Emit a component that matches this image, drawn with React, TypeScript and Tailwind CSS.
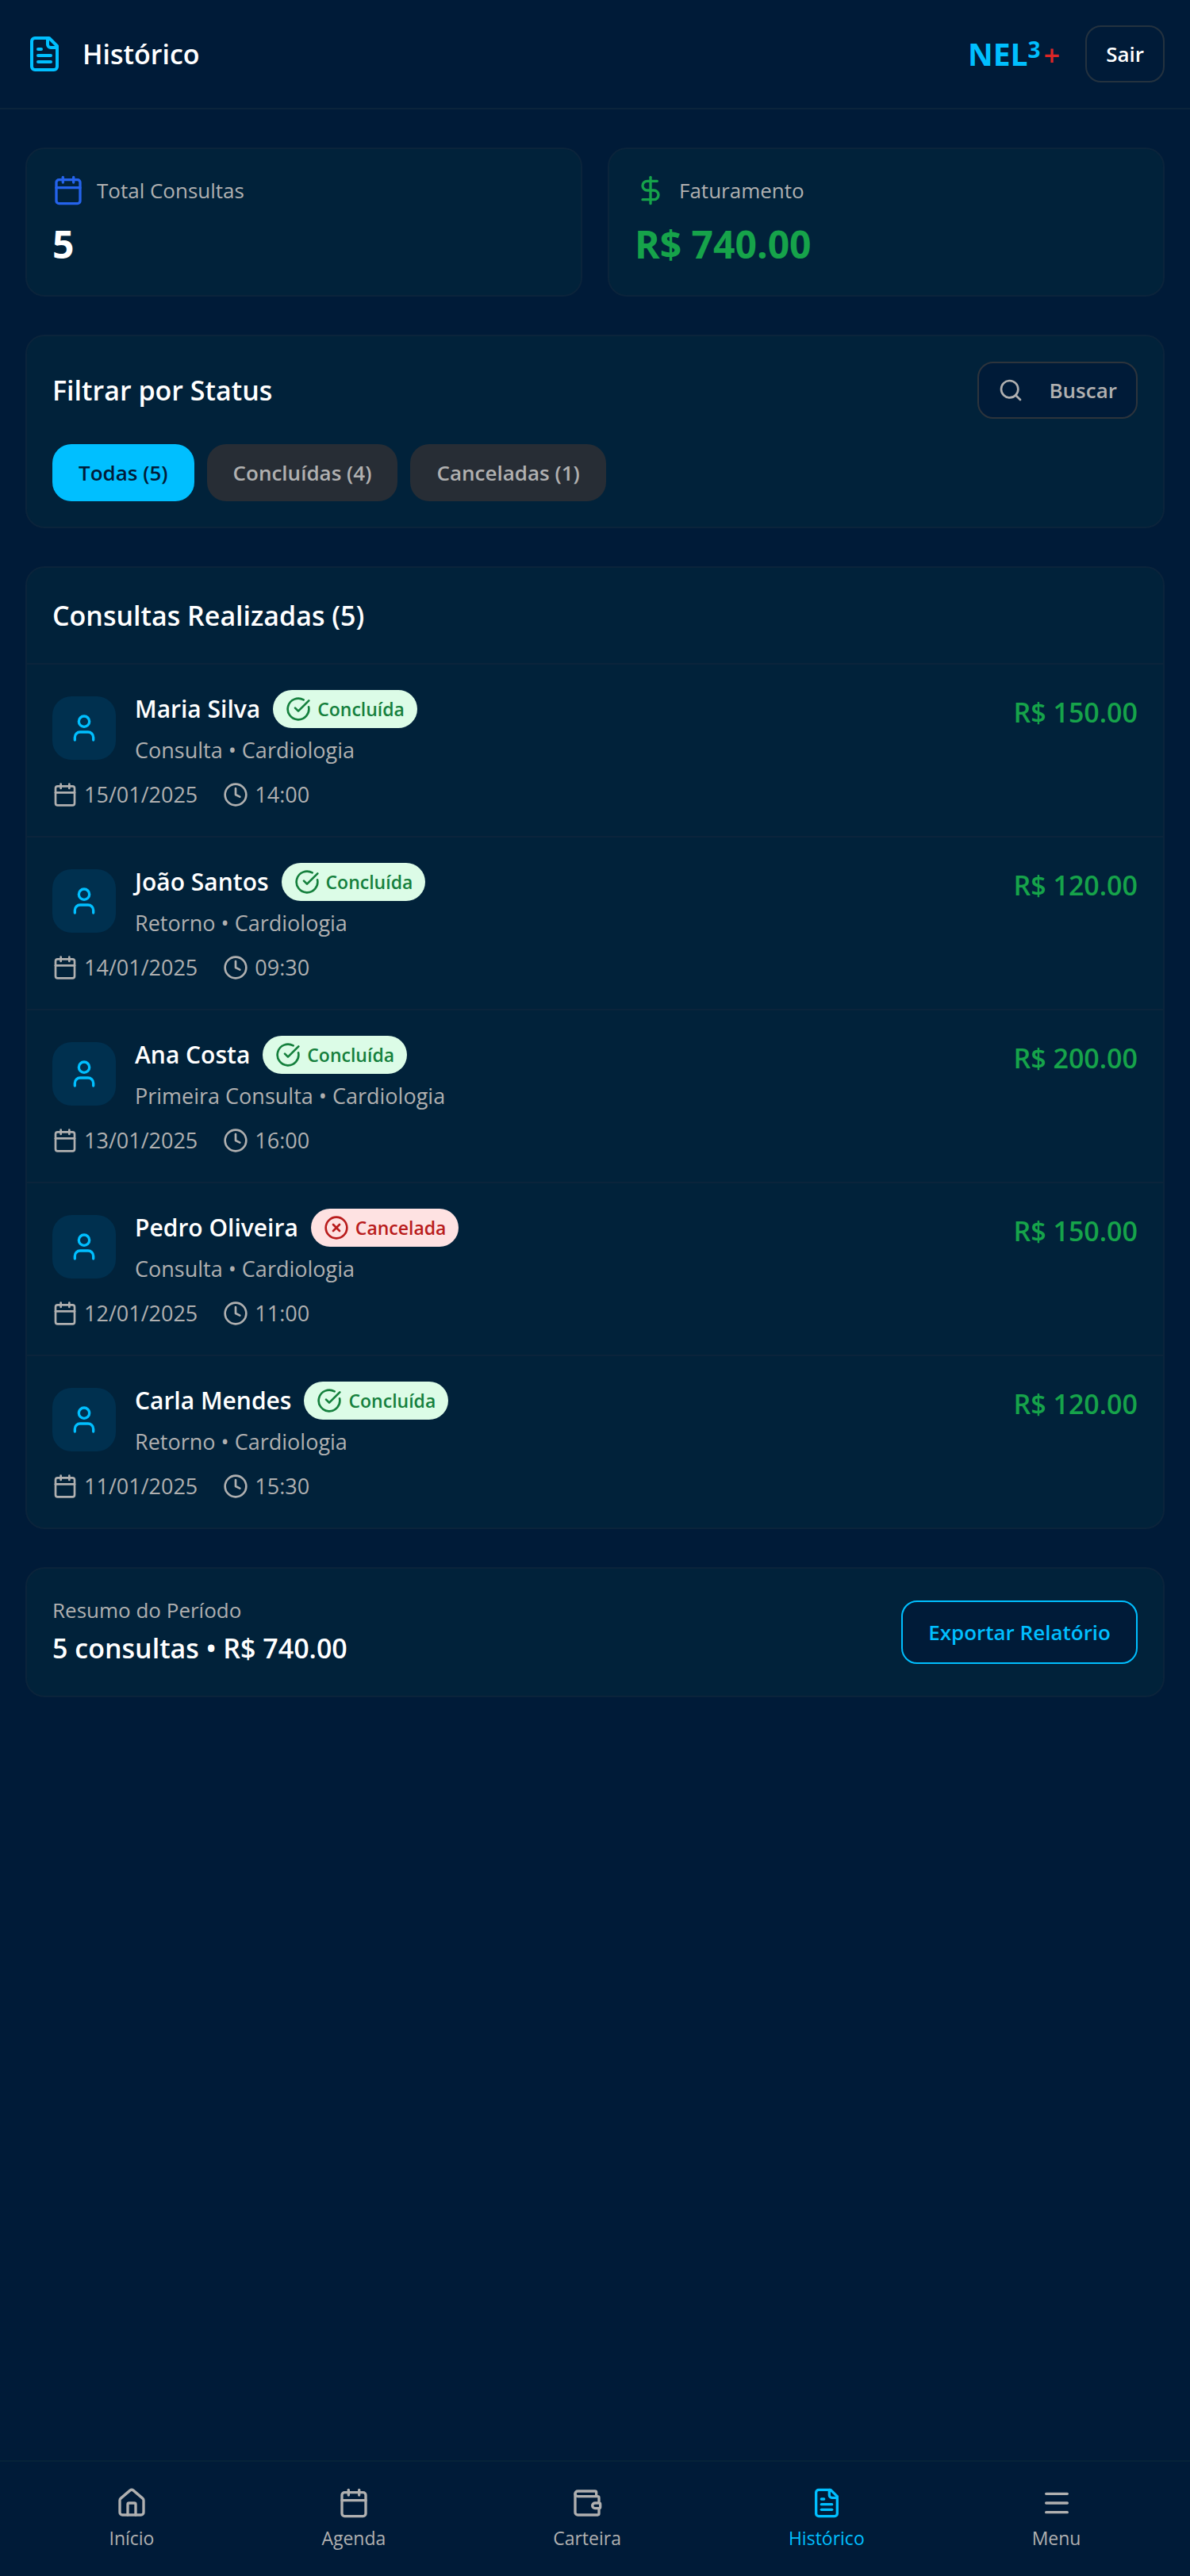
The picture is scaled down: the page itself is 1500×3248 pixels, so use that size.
import type { ReactNode } from "react";
import {
  Calendar,
  CircleCheckBig,
  CircleX,
  Clock,
  DollarSign,
  House,
  Menu,
  Search,
  User,
  Wallet,
} from "lucide-react";

type Status = "Concluída" | "Cancelada";

interface Consulta {
  nome: string;
  status: Status;
  tipo: string;
  data: string;
  hora: string;
  valor: string;
}

const consultas: Consulta[] = [
  { nome: "Maria Silva", status: "Concluída", tipo: "Consulta", data: "15/01/2025", hora: "14:00", valor: "R$ 150.00" },
  { nome: "João Santos", status: "Concluída", tipo: "Retorno", data: "14/01/2025", hora: "09:30", valor: "R$ 120.00" },
  { nome: "Ana Costa", status: "Concluída", tipo: "Primeira Consulta", data: "13/01/2025", hora: "16:00", valor: "R$ 200.00" },
  { nome: "Pedro Oliveira", status: "Cancelada", tipo: "Consulta", data: "12/01/2025", hora: "11:00", valor: "R$ 150.00" },
  { nome: "Carla Mendes", status: "Concluída", tipo: "Retorno", data: "11/01/2025", hora: "15:30", valor: "R$ 120.00" },
];

const filtros = [
  { label: "Todas (5)", ativo: true },
  { label: "Concluídas (4)", ativo: false },
  { label: "Canceladas (1)", ativo: false },
];

function FileIcon({ className }: { className: string }) {
  return (
    <svg
      viewBox="0 0 24 24"
      fill="none"
      stroke="currentColor"
      strokeWidth="2"
      strokeLinecap="round"
      strokeLinejoin="round"
      className={className}
      aria-hidden="true"
    >
      <path d="M15 2H6a2 2 0 0 0-2 2v16a2 2 0 0 0 2 2h12a2 2 0 0 0 2-2V7Z" />
      <path d="M14 2v4a2 2 0 0 0 2 2h4" />
      <path d="M10 9H8" />
      <path d="M16 13H8" />
      <path d="M16 17H8" />
    </svg>
  );
}

function Card({ children, className = "" }: { children: ReactNode; className?: string }) {
  return (
    <section className={`rounded-3xl border-2 border-[#0b243b] bg-[#01223a] ${className}`}>{children}</section>
  );
}

function StatusBadge({ status }: { status: Status }) {
  const done = status === "Concluída";
  const Icon = done ? CircleCheckBig : CircleX;
  return (
    <span
      className={`flex items-center gap-2 rounded-full px-4 py-2 text-[23px] leading-8 font-semibold ${
        done ? "bg-[#dcfce7] text-[#15803d]" : "bg-[#fee2e2] text-[#b91c1c]"
      }`}
    >
      <Icon className="size-8" />
      {status}
    </span>
  );
}

function ConsultaRow({ item }: { item: Consulta }) {
  return (
    <li className="flex items-start justify-between p-8">
      <div>
        <div className="flex items-center gap-6">
          <div className="flex size-20 items-center justify-center rounded-3xl bg-[#00304f] text-[#00bfff]">
            <User className="size-10" />
          </div>
          <div>
            <div className="flex items-center gap-4">
              <h3 className="text-[30px] leading-12 font-semibold text-white">{item.nome}</h3>
              <StatusBadge status={item.status} />
            </div>
            <p className="mt-2 text-[27px] leading-10">{item.tipo} • Cardiologia</p>
          </div>
        </div>
        <div className="mt-4 flex items-center gap-8 text-[27px] leading-10">
          <span className="flex items-center gap-2">
            <Calendar className="size-8" />
            {item.data}
          </span>
          <span className="flex items-center gap-2">
            <Clock className="size-8" />
            {item.hora}
          </span>
        </div>
      </div>
      <span className="text-[34px] leading-14 font-semibold text-[#16a34a]">{item.valor}</span>
    </li>
  );
}

function NavItem({ icon, label, active = false }: { icon: ReactNode; label: string; active?: boolean }) {
  return (
    <a
      href="#"
      aria-current={active ? "page" : undefined}
      className={`flex flex-col items-center gap-2 p-4 text-[23px] leading-8 ${active ? "text-[#00bfff]" : ""}`}
    >
      {icon}
      {label}
    </a>
  );
}

export default function App() {
  return (
    <div className="flex min-h-screen flex-col bg-[#001b38] font-['Open_Sans',sans-serif] text-[#b0b0b0]">
      <header className="flex items-center justify-between border-b-2 border-[#0b243b] p-8">
        <div className="flex items-center gap-6">
          <FileIcon className="size-12 text-[#00bfff]" />
          <h1 className="text-[34px] leading-14 font-semibold text-white">Histórico</h1>
        </div>
        <div className="flex items-center gap-8">
          <div className="flex items-center text-[39px] leading-14 font-bold text-[#00bfff]">
            <span>NEL</span>
            <span className="self-start text-[28px] leading-12">3</span>
            <span className="mt-1 ml-1 text-[36px] leading-14 font-semibold text-[#dc2626]">+</span>
          </div>
          <button
            type="button"
            className="h-18 rounded-[20px] border-2 border-[#24323f] px-6 text-[26px] leading-10 font-semibold text-white"
          >
            Sair
          </button>
        </div>
      </header>

      <main className="flex flex-col gap-12 px-8 py-12">
        <div className="grid grid-cols-2 gap-8">
          <Card className="p-8">
            <div className="flex items-center gap-4 text-[26px] leading-10">
              <Calendar className="size-10 text-[#2563eb]" />
              Total Consultas
            </div>
            <p className="mt-4 text-[48px] leading-16 font-bold text-white">5</p>
          </Card>
          <Card className="p-8">
            <div className="flex items-center gap-4 text-[26px] leading-10">
              <DollarSign className="size-10 text-[#16a34a]" />
              Faturamento
            </div>
            <p className="mt-4 text-[48px] leading-16 font-bold text-[#16a34a]">R$ 740.00</p>
          </Card>
        </div>

        <Card className="p-8">
          <div className="flex items-center justify-between">
            <h2 className="text-[34px] leading-14 font-semibold text-white">Filtrar por Status</h2>
            <button
              type="button"
              className="flex h-18 items-center gap-8 rounded-[20px] border-2 border-[#2d343c] bg-[#001b38] px-6 text-[26px] leading-10 font-semibold"
            >
              <Search className="size-8" />
              Buscar
            </button>
          </div>
          <div className="mt-8 flex gap-4">
            {filtros.map((f) => (
              <button
                key={f.label}
                type="button"
                aria-pressed={f.ativo}
                className={`h-18 rounded-3xl px-[33px] text-[26px] leading-10 font-semibold ${
                  f.ativo ? "bg-[#00bfff] text-[#001b38]" : "bg-[#272d35]"
                }`}
              >
                {f.label}
              </button>
            ))}
          </div>
        </Card>

        <Card>
          <h2 className="border-b-2 border-[#0b243b] p-8 text-[34px] leading-14 font-semibold text-white">
            Consultas Realizadas (5)
          </h2>
          <ul className="divide-y-2 divide-[#0b243b]">
            {consultas.map((item) => (
              <ConsultaRow key={item.nome} item={item} />
            ))}
          </ul>
        </Card>

        <Card className="flex items-center justify-between p-8">
          <div>
            <p className="text-[26px] leading-10">Resumo do Período</p>
            <p className="text-[34px] leading-14 font-semibold text-white">5 consultas • R$ 740.00</p>
          </div>
          <button
            type="button"
            className="h-20 rounded-[20px] border-2 border-[#00bfff] bg-[#001b38] px-8 text-[26px] leading-10 font-semibold text-[#00bfff]"
          >
            Exportar Relatório
          </button>
        </Card>
      </main>

      <nav className="sticky bottom-0 mt-auto flex justify-around border-t-2 border-[#062339] bg-[#001b38] px-8 py-4">
        <NavItem icon={<House className="size-10" />} label="Início" />
        <NavItem icon={<Calendar className="size-10" />} label="Agenda" />
        <NavItem icon={<Wallet className="size-10" />} label="Carteira" />
        <NavItem icon={<FileIcon className="size-10" />} label="Histórico" active />
        <NavItem icon={<Menu className="size-10" />} label="Menu" />
      </nav>
    </div>
  );
}
